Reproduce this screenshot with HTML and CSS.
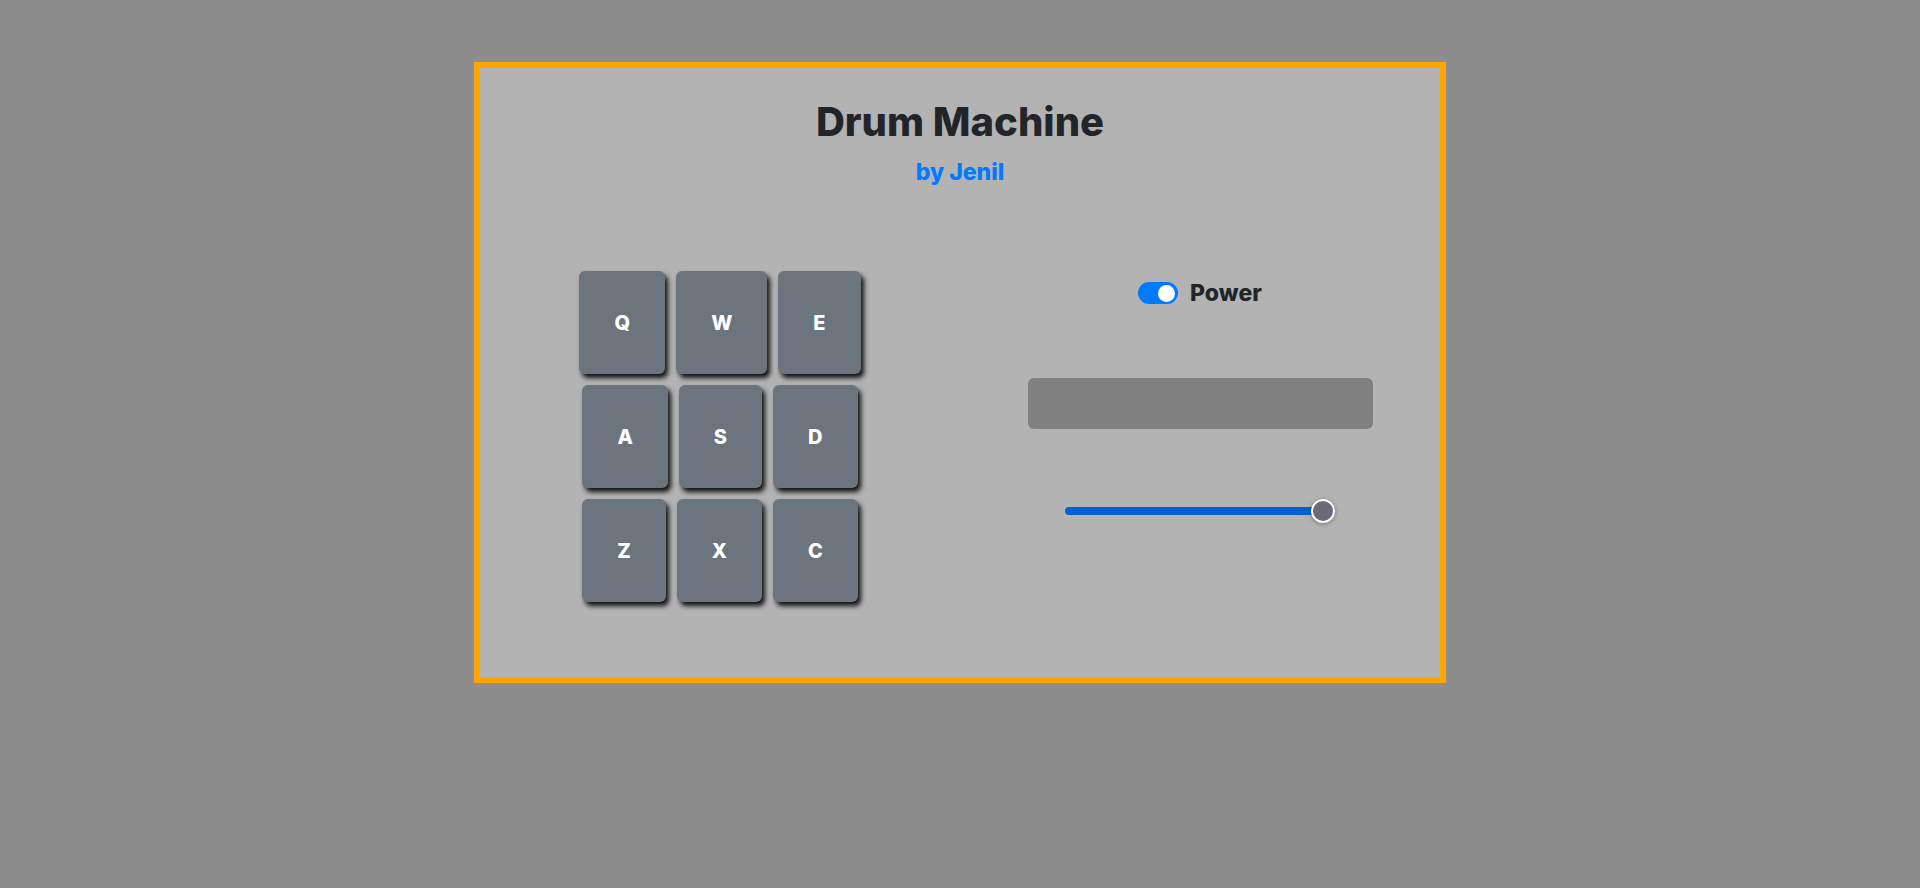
FILE: index.html
```html
<!DOCTYPE html>
<html lang="en">
<head>
<meta charset="utf-8">
<title>Drum Machine</title>
<link rel="stylesheet" href="styles.css">
</head>
<body>
<div class="machine">
  <h1 class="title">Drum Machine</h1>
  <h5 class="author">by Jenil</h5>
  <div class="main">
    <div class="pads">
      <div class="pad-row">
        <div class="pad">Q</div>
        <div class="pad">W</div>
        <div class="pad">E</div>
      </div>
      <div class="pad-row">
        <div class="pad">A</div>
        <div class="pad">S</div>
        <div class="pad">D</div>
      </div>
      <div class="pad-row">
        <div class="pad">Z</div>
        <div class="pad">X</div>
        <div class="pad">C</div>
      </div>
    </div>
    <div class="controls">
      <div class="power">
        <span class="switch"><span class="knob"></span></span>
        <span class="power-label">Power</span>
      </div>
      <div class="display"></div>
      <input class="volume" type="range" min="0" max="1" step="0.01" value="1">
    </div>
  </div>
</div>
</body>
</html>
```
FILE: styles.css
```css
html, body {
  margin: 0;
  padding: 0;
}
body {
  background: #8d8d8d;
  font-family: Inter, "DejaVu Sans", sans-serif;
  padding-top: 62px;
  height: 826px;
}
.machine {
  box-sizing: content-box;
  width: 960px;
  margin: 0 auto;
  border: 6px solid #ffa500;
  background: #b3b3b3;
  padding: 30px 0 74px;
  height: 505px;
}
.title {
  margin: 0;
  text-align: center;
  font-size: 40px;
  line-height: 48px;
  font-weight: 800;
  color: #212529;
}
.author {
  margin: 13px 0 0;
  text-align: center;
  font-size: 23px;
  line-height: 26px;
  font-weight: 800;
  color: #007bff;
}
.main {
  display: flex;
  margin-top: 86px;
}
.pads {
  width: 480px;
  display: flex;
  flex-direction: column;
  gap: 11px;
}
.pad-row {
  display: flex;
  justify-content: center;
  gap: 11px;
}
.pad {
  height: 103px;
  padding: 0 35px;
  display: flex;
  align-items: center;
  justify-content: center;
  background: #6c757d;
  color: #fff;
  font-size: 20px;
  font-weight: 800;
  border-radius: 6px;
  box-shadow: 3px 4px 5px #111;
}
.controls {
  width: 480px;
  display: flex;
  flex-direction: column;
  align-items: center;
  padding-top: 11px;
}
.power {
  display: flex;
  align-items: center;
  gap: 12px;
  height: 22px;
}
.switch {
  width: 40px;
  height: 22px;
  border-radius: 11px;
  background: #007bff;
  display: flex;
  align-items: center;
  justify-content: flex-end;
  padding: 0 3px;
  box-sizing: border-box;
}
.knob {
  width: 17px;
  height: 17px;
  border-radius: 50%;
  background: #fff;
}
.power-label {
  font-size: 23px;
  font-weight: 800;
  color: #212529;
}
.display {
  margin-top: 74px;
  width: 345px;
  height: 51px;
  border-radius: 6px;
  background: #808080;
}
.volume {
  -webkit-appearance: none;
  appearance: none;
  margin: 70px 0 0;
  width: 270px;
  height: 24px;
  background: transparent;
}
.volume::-webkit-slider-runnable-track {
  height: 8px;
  border-radius: 4px;
  background: #0062d6;
}
.volume::-webkit-slider-thumb {
  -webkit-appearance: none;
  appearance: none;
  width: 24px;
  height: 24px;
  margin-top: -8px;
  border-radius: 50%;
  background: #6a6a78;
  border: 2px solid #fff;
  box-sizing: border-box;
  box-shadow: 0 1px 4px rgba(0, 0, 0, 0.35);
}
```
